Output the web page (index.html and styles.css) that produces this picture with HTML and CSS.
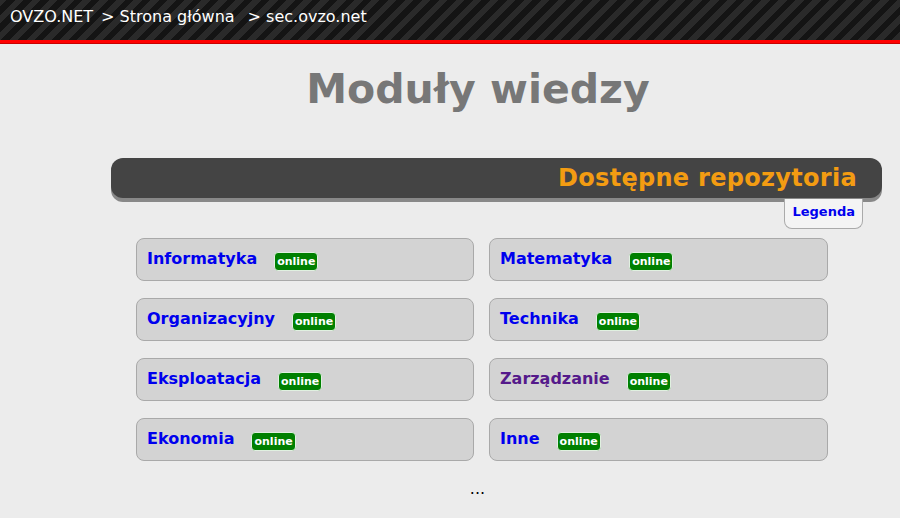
FILE: index.html
```html
<!DOCTYPE html>
<html lang="pl">
<head>
<meta charset="utf-8">
<title>Moduły wiedzy</title>
<link rel="stylesheet" href="styles.css">
</head>
<body>
<header class="topbar">
  <nav class="crumbs">
    <a href="#">OVZO.NET</a>
    <span class="sep">&gt; <a href="#">Strona główna</a></span>
    <span class="sep wide">&gt; <a href="#">sec.ovzo.net</a></span>
  </nav>
</header>

<main class="page">
  <h1 class="title">Moduły wiedzy</h1>

  <section class="repos">
    <div class="repos-head">
      <h2>Dostępne repozytoria</h2>
    </div>
    <div class="legend-row">
      <a class="legend" href="#">Legenda</a>
    </div>

    <div class="grid">
      <div class="card"><a href="#" class="name">Informatyka</a><span class="badge">online</span></div>
      <div class="card"><a href="#" class="name">Matematyka</a><span class="badge">online</span></div>
      <div class="card"><a href="#" class="name">Organizacyjny</a><span class="badge">online</span></div>
      <div class="card"><a href="#" class="name">Technika</a><span class="badge">online</span></div>
      <div class="card"><a href="#" class="name">Eksploatacja</a><span class="badge">online</span></div>
      <div class="card"><a href="#" class="name visited">Zarządzanie</a><span class="badge">online</span></div>
      <div class="card"><a href="#" class="name">Ekonomia</a><span class="badge">online</span></div>
      <div class="card"><a href="#" class="name">Inne</a><span class="badge">online</span></div>
    </div>

    <p class="more">...</p>
  </section>
</main>
</body>
</html>
```

FILE: styles.css
```css
html, body {
  margin: 0;
  padding: 0;
}

body {
  background: #ececec;
  font-family: "DejaVu Sans", Verdana, sans-serif;
  color: #000;
}

a {
  text-decoration: none;
}

/* top navigation strip */
.topbar {
  height: 40px;
  border-bottom: 3px solid #ff0000;
  background: repeating-linear-gradient(
    -45deg,
    #2a2a2a 0,
    #2a2a2a 6px,
    #141414 6px,
    #141414 12px
  );
  box-shadow: 0 1px 0 #c80000;
}

.crumbs {
  display: flex;
  align-items: baseline;
  padding: 7px 0 0 10px;
  font-size: 16px;
  line-height: 20px;
  color: #fff;
  white-space: nowrap;
}

.crumbs a {
  color: #fff;
}

.crumbs .sep {
  margin-left: 8px;
}

.crumbs .sep.wide {
  margin-left: 13px;
}

/* main column */
.title {
  margin: 21px 0 0 0;
  padding-left: 56px;
  text-align: center;
  font-size: 41px;
  line-height: 50px;
  font-weight: bold;
  color: #777;
}

.repos {
  margin: 44px 18px 0 111px;
}

.repos-head {
  height: 40px;
  background: #444;
  border-radius: 12px;
  box-shadow: 0 4px 0 #888;
  display: flex;
  align-items: center;
  justify-content: flex-end;
  padding-right: 25px;
}

.repos-head h2 {
  margin: 0;
  font-size: 24px;
  line-height: 28px;
  font-weight: bold;
  color: #f39c12;
  letter-spacing: 0.3px;
}

.legend-row {
  display: flex;
  justify-content: flex-end;
  padding-right: 19px;
  margin-top: 1px;
}

.legend {
  display: block;
  padding: 4px 7px 0 7px;
  height: 25px;
  box-sizing: content-box;
  background: #f4f4f4;
  border: 1px solid #aaa;
  border-top: none;
  border-radius: 0 0 8px 8px;
  font-size: 13px;
  line-height: 17px;
  font-weight: bold;
  color: #0000ee;
}

.grid {
  display: grid;
  grid-template-columns: 338px 339px;
  column-gap: 15px;
  row-gap: 17px;
  margin: 9px 0 0 25px;
}

.card {
  height: 41px;
  background: #d3d3d3;
  border: 1px solid #a9a9a9;
  border-radius: 8px;
  display: flex;
  align-items: center;
  padding-left: 10px;
}

.name {
  font-size: 16px;
  font-weight: bold;
  color: #0000ee;
  line-height: 20px;
  margin-top: -2px;
}

.name.visited {
  color: #551a8b;
}

.badge {
  margin-left: 17px;
  margin-top: 3px;
  padding: 0 2px;
  height: 17px;
  line-height: 17px;
  background: #008000;
  border: 1px solid #e0f0e0;
  border-radius: 4px;
  color: #fff;
  font-size: 11px;
  font-weight: bold;
}

.more {
  margin: 18px 0 0 0;
  padding-right: 38px;
  text-align: center;
  font-size: 16px;
  line-height: 20px;
}
```
